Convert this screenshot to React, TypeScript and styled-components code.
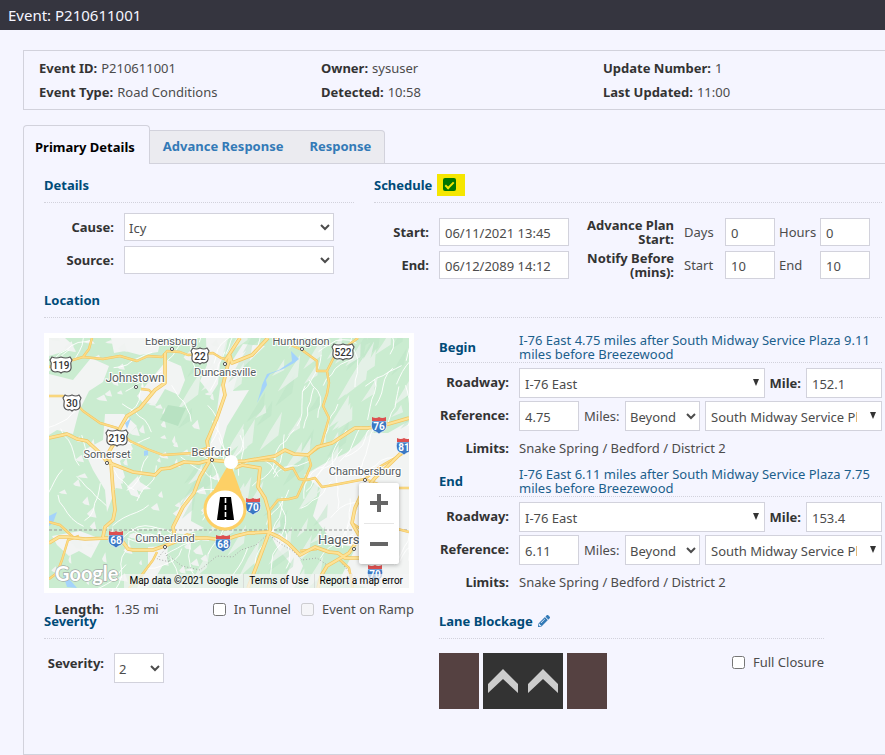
import React, { ReactNode } from "react";
import styled, { createGlobalStyle, css } from "styled-components";
import { FaPencilAlt } from "react-icons/fa";

const line = "#d2d2dc";
const navy = "#004b78";
const muted = "#4c4c4c";

const GlobalStyle = createGlobalStyle`
  *, *::before, *::after { box-sizing: border-box; }
  body {
    margin: 0;
    background: #f5f5ff;
    color: #333;
    font: 13px/18px "Noto Sans", "Open Sans", sans-serif;
  }
  input, select, button { font: inherit; color: ${muted}; margin: 0; }
`;

/* ---------- page frame ---------- */

const TitleBar = styled.header`
  height: 30px;
  padding: 0 8px;
  background: #35353f;
  color: #f5f5ff;
`;

const Title = styled.h1`
  margin: 0;
  font-size: 15px;
  line-height: 30px;
  font-weight: 400;
`;

const Main = styled.main`
  padding: 20px 0 0 23px;
`;

const Summary = styled.dl`
  display: grid;
  grid-template-columns: repeat(3, 1fr);
  margin: 0 0 15px;
  padding: 5px 0 5px 15px;
  border: 1px solid ${line};
  border-right: 0;
  line-height: 24px;
`;

const SummaryItem = styled.div`
  display: flex;
  gap: 4px;
  dt { font-weight: 700; }
  dd { margin: 0; color: ${muted}; }
`;

const Tabs = styled.div`
  display: flex;
  align-items: flex-end;
  margin-bottom: -1px;
`;

const Tab = styled.button<{ $active?: boolean }>`
  height: 34px;
  padding: 0 13px 2px;
  border: 1px solid ${line};
  border-width: 1px 0 1px 0;
  background: #ebebf0;
  color: #337ab7;
  font-weight: 700;
  &:last-child { border-right-width: 1px; border-radius: 0 4px 0 0; }
  ${(p) =>
    p.$active &&
    css`
      height: 39px;
      padding: 3px 14px 0 11px;
      border-width: 1px 1px 0 1px;
      border-radius: 4px 4px 0 0;
      background: #f5f5ff;
      color: #000;
    `}
`;

const Panel = styled.section`
  padding: 12px 3px 45px 20px;
  border: 1px solid ${line};
  border-right: 0;
`;

const Heading = styled.h2<{ $width?: number }>`
  display: flex;
  align-items: center;
  gap: 5px;
  height: 27px;
  width: ${(p) => (p.$width ? `${p.$width}px` : "auto")};
  margin: 0;
  padding-bottom: 8px;
  border-bottom: 1px dotted ${line};
  color: ${navy};
  font-size: 13px;
  font-weight: 700;
`;

/* ---------- form parts ---------- */

const fieldBox = css<{ $width?: number; $tall?: boolean }>`
  flex: ${(p) => (p.$width ? "none" : "1 1 0")};
  width: ${(p) => (p.$width ? `${p.$width}px` : "100%")};
  min-width: 0;
  height: ${(p) => (p.$tall ? 30 : 28)}px;
  border: 1px solid ${line};
  border-radius: 0;
  background-color: #fff;
`;

const TextInput = styled.input<{ $width?: number; $tall?: boolean }>`
  ${fieldBox}
  padding: 2px 5px 0;
`;

const Select = styled.select<{ $width?: number; $tall?: boolean }>`
  ${fieldBox}
  padding: 2px 0 0;
`;

const ComboBox = styled.span`
  position: relative;
  display: flex;
  flex: 1 1 0;
  min-width: 0;
  svg {
    position: absolute;
    right: 6px;
    top: 11px;
    pointer-events: none;
  }
`;

const ComboSelect = styled.select`
  ${fieldBox}
  height: 30px;
  appearance: none;
  padding: 2px 24px 0 5px;
`;

const Label = styled.label`
  font-weight: 700;
  text-align: right;
`;

const Hint = styled.label<{ $width?: number }>`
  color: ${muted};
  width: ${(p) => (p.$width ? `${p.$width}px` : "auto")};
`;

const Row = styled.div`
  display: grid;
  grid-template-columns: 70px 1fr;
  column-gap: 10px;
  align-items: center;
`;

const Line = styled.div`
  display: flex;
  align-items: center;
  gap: 5px;
  min-width: 0;
`;

const CheckLabel = styled.label`
  display: flex;
  align-items: center;
  gap: 8px;
  color: ${muted};
  input { width: 13px; height: 13px; }
`;

/* ---------- details and schedule ---------- */

const TopGrid = styled.div`
  display: grid;
  grid-template-columns: 310px 1fr;
  column-gap: 20px;
  margin-bottom: 12px;
`;

const DetailsForm = styled.div`
  display: grid;
  row-gap: 5px;
  padding: 10px 20px 0 0;
`;

const ScheduleForm = styled.div`
  display: grid;
  grid-template-columns: 55px 130px 95px 1fr;
  column-gap: 10px;
  row-gap: 5px;
  align-items: center;
  padding-top: 15px;
`;

const StackLabel = styled.span`
  font-weight: 700;
  line-height: 14px;
  text-align: right;
`;

const Pair = styled.div`
  display: grid;
  grid-template-columns: 41px 50px 45px 50px;
  align-items: center;
  label + input + label { padding-left: 4px; }
`;

const Highlight = styled.span`
  display: flex;
  width: 28px;
  height: 22px;
  padding: 4px 6px;
  background: #f5e600;
`;

const GreenCheck = styled.input`
  appearance: none;
  display: grid;
  place-items: center;
  width: 13px;
  height: 13px;
  border-radius: 2px;
  background: #007500;
  &:checked::after {
    content: "";
    width: 5px;
    height: 9px;
    border: solid #f5e600;
    border-width: 0 2px 2px 0;
    transform: rotate(45deg);
  }
`;

/* ---------- location ---------- */

const SplitGrid = styled.div`
  display: grid;
  grid-template-columns: 370px 1fr;
  column-gap: 25px;
`;

const LocationGrid = styled(SplitGrid)`
  height: 279px;
  padding-top: 15px;
  margin-bottom: 15px;
`;

const MapFrame = styled.div`
  position: relative;
  border: 5px solid #fff;
  height: 260px;
  svg { display: block; }
`;

const ZoomControl = styled.div`
  position: absolute;
  right: 10px;
  top: 145px;
  width: 40px;
  padding: 0 5px;
  border-radius: 2px;
  background: #fff;
  box-shadow: 0 1px 4px rgba(0, 0, 0, 0.3);
`;

const ZoomButton = styled.button`
  display: grid;
  place-items: center;
  width: 30px;
  height: 40px;
  padding: 0;
  border: 0;
  background: none;
  & + & { height: 41px; border-top: 1px solid #e6e6e6; }
`;

const Credits = styled.div`
  position: absolute;
  right: 0;
  bottom: 0;
  display: flex;
  height: 14px;
  padding-right: 1px;
  background: rgba(245, 245, 245, 0.7);
  font: 10px/14px Roboto, sans-serif;
  a, span { padding: 0 5px; color: #000; text-decoration: none; white-space: nowrap; }
  a { border-left: 1px solid rgba(200, 200, 200, 0.5); }
`;

const LengthRow = styled.div`
  display: flex;
  align-items: center;
  gap: 10px;
  padding-top: 7px;
  white-space: nowrap;
`;

const LengthLabel = styled.span`
  width: 60px;
  font-weight: 700;
  text-align: right;
`;

const LengthValue = styled.span`
  flex: 1;
  color: ${muted};
`;

const Point = styled.div`
  height: 134px;
`;

const PointHead = styled.div`
  display: grid;
  grid-template-columns: 70px 1fr;
  column-gap: 10px;
  align-items: center;
  height: 30px;
  margin-bottom: 5px;
  padding-bottom: 2px;
  border-bottom: 1px dotted ${line};
  h3 { margin: 0; font-size: 13px; font-weight: 700; color: ${navy}; }
  p { margin: 0; line-height: 14px; color: #1c5f8c; }
`;

const Value = styled.span`
  color: ${muted};
`;

const PointRows = styled.div`
  display: grid;
  row-gap: 3px;
  ${Row} { min-height: 30px; }
  ${Row} > ${Label}, ${Row} > ${Value} { padding-bottom: 2px; }
`;

/* ---------- severity and lanes ---------- */

const SeverityRow = styled.div`
  display: grid;
  grid-template-columns: 60px 50px;
  column-gap: 10px;
  align-items: start;
  padding-top: 14px;
  label { line-height: 20px; }
`;

const LaneColumn = styled.div`
  max-width: 385px;
`;

const LaneRow = styled.div`
  display: flex;
  justify-content: space-between;
  align-items: flex-start;
  padding-top: 14px;
`;

const Lanes = styled.div`
  display: flex;
  gap: 4px;
`;

const Shoulder = styled.div`
  width: 40px;
  height: 56px;
  background: #554141;
`;

const Roadbed = styled.div`
  display: flex;
  background: #333;
`;

const EditButton = styled.button`
  display: flex;
  padding: 0;
  border: 0;
  background: none;
  color: #337ab7;
`;

/* ---------- map drawing ---------- */

const highways = [
  "M116 15V45L106 52L91 70L78 78L71 90L67 102L58 117L62 125L64 152L66 172L64 182L56 189L54 199",
  "M0 100L18 96L28 101L38 103L51 115L58 124L84 134L106 137L112 131L121 130L135 124L150 125L161 122L182 124L196 123L226 118L236 112L245 116L259 117L268 109L283 105L306 90L319 90L336 87L360 80",
  "M219 0L203 17L183 25L181 18L174 47L176 57L168 80L158 103L161 122L151 139L145 155L134 169L124 189L126 199",
  "M176 23L191 0",
  "M0 205L10 199L18 199L36 201L58 200L74 204L79 211L84 212L104 212L118 207L128 203L138 197L147 200L158 200L176 202L187 198L199 195L219 194L230 199L239 205L251 217L266 209L280 214L289 215L296 220L316 220",
  "M186 130L193 127L211 130L209 149L216 160L220 174L221 192L206 232L199 250",
  "M360 107L343 124L326 140L312 157L306 170L303 185L311 199L300 215L290 221L278 228L272 238L269 250",
];

const secondary = [
  "M0 29L34 19L54 21L71 18L88 23L99 18L113 19L118 13L131 14L139 17L164 15L172 20L181 22",
  "M43 0L40 11L34 19",
  "M0 58L14 58L24 62L34 73L51 85L68 90L81 103L98 111L114 117L144 115L158 110",
  "M92 51L100 52L103 55",
  "M226 0L240 6L253 12L268 23V33H278L286 17L309 0",
  "M278 33L280 45L278 56L274 68L280 80L275 97L272 108L259 117L262 127L257 139L248 159L240 161L229 162L221 172",
  "M196 123L216 122L225 123L236 132L244 130L250 141L258 142L266 140L273 149L290 146L316 141L332 128L360 112",
  "M0 184L11 187L24 199",
  "M30 198L19 202L13 222L8 235L0 241",
  "M108 214L104 222L92 238L80 250",
  "M290 221L300 230L304 250",
  "M303 185L322 198L345 190L360 194",
  "M360 150H340L316 141",
  "M251 213L268 211",
];

const plains = [
  "M0 36L24 42L42 20L60 28L54 44L40 53L30 73L24 96L8 92L0 97Z",
  "M0 0L16 0L25 8L10 15L0 18Z",
  "M62 0H112L109 14L91 17L76 13L65 15Z",
  "M118 22L132 28L136 42L130 57L116 51L107 66L94 65L88 58L102 41Z",
  "M56 76L75 76L88 88L78 98L84 111L71 123L76 139L67 149L58 174L56 152L44 132L35 112L54 102Z",
  "M157 0H178L171 26L169 46L162 57L151 43L158 27Z",
  "M194 6L216 8L190 33L184 53L200 52L178 88L169 120L158 119L167 80L171 50L178 31Z",
  "M360 83L339 95L323 95L297 115L278 124L255 137L272 151L264 178L274 191L285 206L307 209L291 241L318 250H360Z",
  "M218 190L231 195L245 209L254 228L245 250H232L242 226L229 211Z",
  "M3 198L31 193L52 201L42 220L30 213L20 218L8 207Z",
  "M99 209L119 208L118 220L107 239L98 250L88 250L99 230Z",
  "M132 163L144 152L142 183L155 190L136 197L122 194Z",
  "M78 149L89 138L91 144L102 151L88 152L91 160L82 157Z",
];

const water = [
  "M242 13L250 21L245 25L234 31L221 36L217 42L218 47L211 59L208 65L212 52L213 47L218 36L230 32L243 23Z",
  "M76 85L82 80L78 91Z",
  "M95 113L99 112V117L95 118Z",
  "M0 178L8 174L4 185L0 188Z",
  "M14 237L22 243L28 250L18 249Z",
];

/** Deterministic pseudo-random values so that the terrain is stable between renders. */
function sequence(seed: number) {
  let s = seed;
  return () => {
    s = (s * 16807) % 2147483647;
    return s / 2147483647;
  };
}

function terrain() {
  const next = sequence(4217);
  const ridges: string[] = [];
  const shade: string[] = [];
  for (let i = 0; i < 120; i++) {
    const x = 125 + next() * 240;
    const y = next() * 260;
    const open = x > 285 && y > 115;
    const len = 10 + next() * 34;
    const w = 1 + next() * 3;
    const dx = len * 0.52;
    const d = `M${x} ${y}L${x + dx * 0.4 + w} ${y - len * 0.5}L${x + dx + w} ${y - len}L${x + dx * 0.7 + w * 2} ${y - len * 0.4}Z`;
    if (open) continue;
    if (i % 3 === 0) shade.push(d);
    else ridges.push(d);
  }
  const flecks: string[] = [];
  for (let i = 0; i < 90; i++) {
    const x = next() * 165;
    const y = next() * 245;
    const a = 2 + next() * 6;
    const b = 2 + next() * 5;
    flecks.push(`M${x} ${y}L${x + a} ${y - b}L${x + a * 1.4} ${y + b * 0.6}L${x + a * 0.4} ${y + b * 0.4}Z`);
  }
  const lanes: string[] = [];
  for (let i = 0; i < 100; i++) {
    let x = next() * 360;
    let y = next() * 250;
    const east = x > 150;
    let angle = east ? -1.1 + (next() - 0.5) * 0.7 : next() * 6.3;
    let d = `M${x} ${y}`;
    for (let k = 0; k < 6; k++) {
      angle += (next() - 0.5) * 0.9;
      x += Math.cos(angle) * 7;
      y += Math.sin(angle) * 7;
      d += `L${x.toFixed(1)} ${y.toFixed(1)}`;
    }
    lanes.push(d);
  }
  return { ridges: ridges.join(""), shade: shade.join(""), flecks: flecks.join(""), lanes: lanes.join("") };
}

const land = terrain();

const towns: [string, number, number, number, number, number][] = [
  // name, text centre x, baseline y, size, dot x, dot y
  ["Ebensburg", 122, 7, 11, 123, 11],
  ["Huntingdon", 252, 7, 11, 253, 11],
  ["Duncansville", 176, 38, 11, 176, 26],
  ["Johnstown", 86, 44, 12, 87, 49],
  ["Somerset", 58, 120, 11, 58, 125],
  ["Bedford", 162, 118, 11, 163, 122],
  ["Chambersburg", 316, 137, 11, 316, 142],
  ["Cumberland", 116, 204, 11, 116, 209],
  ["Hagerstown", 304, 206, 13, 305, 211],
];

function RouteShield({ x, y, n }: { x: number; y: number; n: string }) {
  const w = n.length > 2 ? 10 : 8;
  return (
    <g transform={`translate(${x} ${y})`}>
      <path
        d={`M${-w + 1} -8Q${-w / 2} -6 0 -8Q${w / 2} -6 ${w - 1} -8L${w + 1} -5Q${w - 1} -2 ${w} 1Q${w + 1} 6 ${w - 4} 7Q2 6 0 8Q-2 6 ${-w + 4} 7Q${-w - 1} 6 ${-w} 1Q${-w + 1} -2 ${-w - 1} -5Z`}
        fill="#fff"
        stroke="#555"
        strokeWidth="1.2"
      />
      <text y="4" textAnchor="middle" fontSize="10" fontWeight="500" fill="#333">{n}</text>
    </g>
  );
}

function Interstate({ x, y, n }: { x: number; y: number; n: string }) {
  return (
    <g transform={`translate(${x} ${y})`}>
      <path d="M-7 -4Q-9 3 -5 6Q-2 7 0 9Q2 7 5 6Q9 3 7 -4Z" fill="#3a78c4" stroke="#fff" strokeWidth="0.6" />
      <path d="M-7 -8Q-3 -6 0 -8Q3 -6 7 -8V-4H-7Z" fill="#dc5050" />
      <text y="5" textAnchor="middle" fontSize="10" fontWeight="700" fill="#fff">{n}</text>
    </g>
  );
}

function MapDrawing() {
  return (
    <svg width="100%" height="250" viewBox="0 0 360 250" preserveAspectRatio="xMidYMid slice" fontFamily="Roboto, sans-serif" role="img" aria-label="Map of the event location">
      <rect width="360" height="250" fill="#caecd0" />
      <path d={plains.join("")} fill="#f2f4f3" />
      <path d={land.shade} fill="#bce4c6" opacity="0.5" />
      <path d={land.ridges} fill="#f0f3f1" opacity="0.7" />
      <path d={land.flecks} fill="#f0f3f1" />
      <path d="M119 67L137 70L129 88L111 82Z" fill="#b8e2c2" />
      <path d={land.lanes} fill="none" stroke="#fff" strokeWidth="0.9" />
      <path d={water.join("")} fill="#a4d3fb" />
      <path d="M0 192H360" stroke="#999" strokeDasharray="3 2" />
      <path d="M118 209L108 221L121 224L116 215L133 228L151 232L168 218L184 219L192 212L207 207L219 196L232 206L244 213L253 222L268 220L278 227L289 221L302 236L320 248" fill="none" stroke="#aaa" strokeDasharray="1 2" />
      <g fill="none" strokeLinejoin="round">
        <path d={secondary.join("")} stroke="#f2c560" strokeWidth="2.4" />
        <path d={secondary.join("")} stroke="#fcdb85" strokeWidth="1.4" />
        <path d={highways.join("")} stroke="#f2c560" strokeWidth="3.6" />
        <path d={highways.join("")} stroke="#fde296" strokeWidth="2.2" />
      </g>
      {towns.map(([name, x, y, size, dx, dy]) => (
        <g key={name}>
          <circle cx={dx} cy={dy} r="1.6" fill="#fff" stroke="#555" />
          <text x={x} y={y} fontSize={size} textAnchor="middle" fill="#555b5d" stroke="#fff" strokeWidth="2" paintOrder="stroke">{name}</text>
        </g>
      ))}
      <RouteShield x={12} y={27} n="119" />
      <RouteShield x={151} y={18} n="22" />
      <RouteShield x={23} y={65} n="30" />
      <RouteShield x={68} y={100} n="219" />
      <RouteShield x={294} y={14} n="522" />
      <Interstate x={330} y={87} n="76" />
      <Interstate x={355} y={108} n="81" />
      <Interstate x={204} y={168} n="70" />
      <Interstate x={67} y={201} n="68" />
      <Interstate x={174} y={205} n="68" />
      <Interstate x={326} y={235} n="70" />
      <path d="M181 124L160 160H194Z" fill="#fdd066" />
      <circle cx="182" cy="124" r="7" fill="#fff" />
      <circle cx="176" cy="171" r="20" fill="#fff" stroke="#fdd066" strokeWidth="3" />
      <path d="M171 159H182L185 182H168Z" fill="#000" />
      <path d="M176.500 160V182" stroke="#fff" strokeWidth="1.6" strokeDasharray="5 2" />
      <text x="6" y="243" fontFamily="Lato, sans-serif" fontSize="20" fontWeight="700" fill="#fff" stroke="#a3aca7" strokeWidth="1.4" paintOrder="stroke">Google</text>
    </svg>
  );
}

/* ---------- composed parts ---------- */

function Combo({ id, label, value }: { id: string; label?: string; value: string }) {
  return (
    <ComboBox>
      <ComboSelect id={id} aria-label={label} defaultValue={value}>
        <option>{value}</option>
      </ComboSelect>
      <svg width="6" height="7" viewBox="0 0 6 7" aria-hidden="true">
        <path d="M0 0H6L3 7Z" fill="#333" />
      </svg>
    </ComboBox>
  );
}

interface PointProps {
  name: string;
  description: string;
  mile: string;
  offset: string;
}

function LocationPoint({ name, description, mile, offset }: PointProps) {
  const id = name.toLowerCase();
  return (
    <Point>
      <PointHead>
        <h3>{name}</h3>
        <p>{description}</p>
      </PointHead>
      <PointRows>
        <Row>
          <Label htmlFor={`${id}-road`}>Roadway:</Label>
          <Line>
            <Combo id={`${id}-road`} value="I-76 East" />
            <Label htmlFor={`${id}-mile`}>Mile:</Label>
            <TextInput id={`${id}-mile`} $width={76} $tall defaultValue={mile} />
          </Line>
        </Row>
        <Row>
          <Label htmlFor={`${id}-ref`}>Reference:</Label>
          <Line>
            <TextInput id={`${id}-ref`} $width={60} $tall defaultValue={offset} />
            <Hint htmlFor={`${id}-dir`} $width={36}>Miles:</Hint>
            <Select id={`${id}-dir`} $width={75} $tall defaultValue="Beyond">
              <option>Beyond</option>
              <option>Before</option>
            </Select>
            <Combo id={`${id}-place`} label={`${name} reference`} value="South Midway Service Plaza" />
          </Line>
        </Row>
        <Row>
          <Label as="span">Limits:</Label>
          <Value>Snake Spring / Bedford / District 2</Value>
        </Row>
      </PointRows>
    </Point>
  );
}

function Fact({ name, children }: { name: string; children: ReactNode }) {
  return (
    <SummaryItem>
      <dt>{name}:</dt>
      <dd>{children}</dd>
    </SummaryItem>
  );
}

function LaneArrow() {
  return (
    <svg width="40" height="56" viewBox="0 0 40 56" aria-hidden="true">
      <path d="M5 31L20 16L35 31V40L20 26L5 40Z" fill="#ccc" />
    </svg>
  );
}

export default function App() {
  return (
    <>
      <GlobalStyle />
      <TitleBar>
        <Title>Event: P210611001</Title>
      </TitleBar>
      <Main>
        <Summary>
          <Fact name="Event ID">P210611001</Fact>
          <Fact name="Owner">sysuser</Fact>
          <Fact name="Update Number">1</Fact>
          <Fact name="Event Type">Road Conditions</Fact>
          <Fact name="Detected">10:58</Fact>
          <Fact name="Last Updated">11:00</Fact>
        </Summary>

        <Tabs role="tablist">
          <Tab role="tab" aria-selected="true" $active>Primary Details</Tab>
          <Tab role="tab" aria-selected="false">Advance Response</Tab>
          <Tab role="tab" aria-selected="false">Response</Tab>
        </Tabs>

        <Panel>
          <TopGrid>
            <div>
              <Heading>Details</Heading>
              <DetailsForm>
                <Row>
                  <Label htmlFor="cause">Cause:</Label>
                  <Select id="cause" defaultValue="Icy">
                    <option>Icy</option>
                  </Select>
                </Row>
                <Row>
                  <Label htmlFor="source">Source:</Label>
                  <Select id="source" defaultValue="">
                    <option value=""></option>
                  </Select>
                </Row>
              </DetailsForm>
            </div>
            <div>
              <Heading>
                <label htmlFor="scheduled">Schedule</label>
                <Highlight>
                  <GreenCheck id="scheduled" type="checkbox" defaultChecked />
                </Highlight>
              </Heading>
              <ScheduleForm>
                <Label htmlFor="start">Start:</Label>
                <TextInput id="start" defaultValue="06/11/2021 13:45" />
                <StackLabel>Advance Plan Start:</StackLabel>
                <Pair>
                  <Hint htmlFor="plan-days">Days</Hint>
                  <TextInput id="plan-days" defaultValue="0" />
                  <Hint htmlFor="plan-hours">Hours</Hint>
                  <TextInput id="plan-hours" defaultValue="0" />
                </Pair>
                <Label htmlFor="finish">End:</Label>
                <TextInput id="finish" defaultValue="06/12/2089 14:12" />
                <StackLabel>Notify Before (mins):</StackLabel>
                <Pair>
                  <Hint htmlFor="notify-start">Start</Hint>
                  <TextInput id="notify-start" defaultValue="10" />
                  <Hint htmlFor="notify-end">End</Hint>
                  <TextInput id="notify-end" defaultValue="10" />
                </Pair>
              </ScheduleForm>
            </div>
          </TopGrid>

          <Heading>Location</Heading>
          <LocationGrid>
            <div>
              <MapFrame>
                <MapDrawing />
                <ZoomControl>
                  <ZoomButton aria-label="Zoom in">
                    <svg width="18" height="18" viewBox="0 0 18 18">
                      <path d="M0 9H18M9 0V18" stroke="#666" strokeWidth="4" />
                    </svg>
                  </ZoomButton>
                  <ZoomButton aria-label="Zoom out">
                    <svg width="18" height="18" viewBox="0 0 18 18">
                      <path d="M0 9H18" stroke="#666" strokeWidth="4" />
                    </svg>
                  </ZoomButton>
                </ZoomControl>
                <Credits>
                  <span>Map data ©2021 Google</span>
                  <a href="#terms">Terms of Use</a>
                  <a href="#report">Report a map error</a>
                </Credits>
              </MapFrame>
              <LengthRow>
                <LengthLabel>Length:</LengthLabel>
                <LengthValue>1.35 mi</LengthValue>
                <CheckLabel>
                  <input type="checkbox" />
                  In Tunnel
                </CheckLabel>
                <CheckLabel>
                  <input type="checkbox" disabled />
                  Event on Ramp
                </CheckLabel>
              </LengthRow>
            </div>
            <div>
              <LocationPoint
                name="Begin"
                description="I-76 East 4.75 miles after South Midway Service Plaza 9.11 miles before Breezewood"
                mile="152.1"
                offset="4.75"
              />
              <LocationPoint
                name="End"
                description="I-76 East 6.11 miles after South Midway Service Plaza 7.75 miles before Breezewood"
                mile="153.4"
                offset="6.11"
              />
            </div>
          </LocationGrid>

          <SplitGrid>
            <div>
              <Heading $width={60}>Severity</Heading>
              <SeverityRow>
                <Label htmlFor="severity">Severity:</Label>
                <Select id="severity" $width={50} $tall defaultValue="2">
                  <option>1</option>
                  <option>2</option>
                  <option>3</option>
                </Select>
              </SeverityRow>
            </div>
            <LaneColumn>
              <Heading>
                Lane Blockage
                <EditButton aria-label="Edit lane blockage">
                  <FaPencilAlt size={12} />
                </EditButton>
              </Heading>
              <LaneRow>
                <Lanes>
                  <Shoulder />
                  <Roadbed>
                    <LaneArrow />
                    <LaneArrow />
                  </Roadbed>
                  <Shoulder />
                </Lanes>
                <CheckLabel>
                  <input type="checkbox" />
                  Full Closure
                </CheckLabel>
              </LaneRow>
            </LaneColumn>
          </SplitGrid>
        </Panel>
      </Main>
    </>
  );
}
